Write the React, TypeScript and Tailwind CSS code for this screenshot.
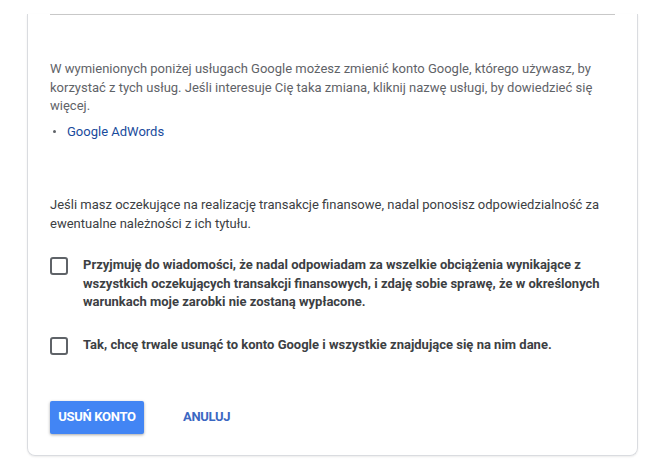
import React, { useState } from "react"

const font = { fontFamily: "Roboto, 'Noto Sans', Arial, sans-serif" }

function Check({ label }: { label: string }) {
  const [on, setOn] = useState(false)
  return (
    <label className="flex items-start gap-[15px] cursor-pointer">
      <button
        type="button"
        onClick={() => setOn(!on)}
        className={`mt-[1px] h-[18px] w-[18px] shrink-0 rounded-[3px] border-2 ${on ? "border-[#4285f4] bg-[#4285f4]" : "border-[#5f6368] bg-white"}`}
      />
      <span className="text-[13px] leading-[18.5px] font-bold text-[#3c4043]">{label}</span>
    </label>
  )
}

export default function App() {
  return (
    <div className="w-[660px] h-[463px] bg-white overflow-hidden pt-px" style={font}>
      <div className="ml-[27px] mr-[22px] -mt-px pb-[21px] rounded-b-[8px] border border-t-0 border-[#dadce0] shadow-[0_1px_2px_rgba(0,0,0,0.08)] px-[22px]">
        <div className="border-t border-[#c8c8c8] mt-[14px]" />

        <p className="mt-[45px] text-[13px] leading-[18.5px] text-[#5f6368] pr-[10px]">
          W wymienionych poniżej usługach Google możesz zmienić konto Google, którego używasz, by korzystać z tych usług. Jeśli interesuje Cię taka zmiana, kliknij nazwę usługi, by dowiedzieć się więcej.
        </p>
        <ul className="mt-[7px] text-[13px] leading-[18.5px]">
          <li className="flex items-center gap-[11px]">
            <span className="h-[3px] w-[3px] rounded-full bg-[#5f6368] ml-[3px]" />
            <a className="text-[#1a4b9c]">Google AdWords</a>
          </li>
        </ul>

        <p className="mt-[55px] text-[13px] leading-[18.5px] text-[#3c4043] pr-[10px]">
          Jeśli masz oczekujące na realizację transakcje finansowe, nadal ponosisz odpowiedzialność za ewentualne należności z ich tytułu.
        </p>

        <div className="mt-[23px] flex flex-col gap-[24px]">
          <Check label="Przyjmuję do wiadomości, że nadal odpowiadam za wszelkie obciążenia wynikające z wszystkich oczekujących transakcji finansowych, i zdaję sobie sprawę, że w określonych warunkach moje zarobki nie zostaną wypłacone." />
          <Check label="Tak, chcę trwale usunąć to konto Google i wszystkie znajdujące się na nim dane." />
        </div>

        <div className="mt-[46px] flex items-center gap-[16px]">
          <button className="h-[33px] w-[94px] rounded-[2px] bg-[#4285f4] text-white text-[13px] font-bold tracking-[-0.3px] shadow-[0_1px_3px_rgba(0,0,0,0.35)]">
            USUŃ KONTO
          </button>
          <button className="h-[33px] px-[23px] text-[#3b67c2] text-[13px] font-bold tracking-[-0.3px]">
            ANULUJ
          </button>
        </div>
      </div>
    </div>
  )
}
